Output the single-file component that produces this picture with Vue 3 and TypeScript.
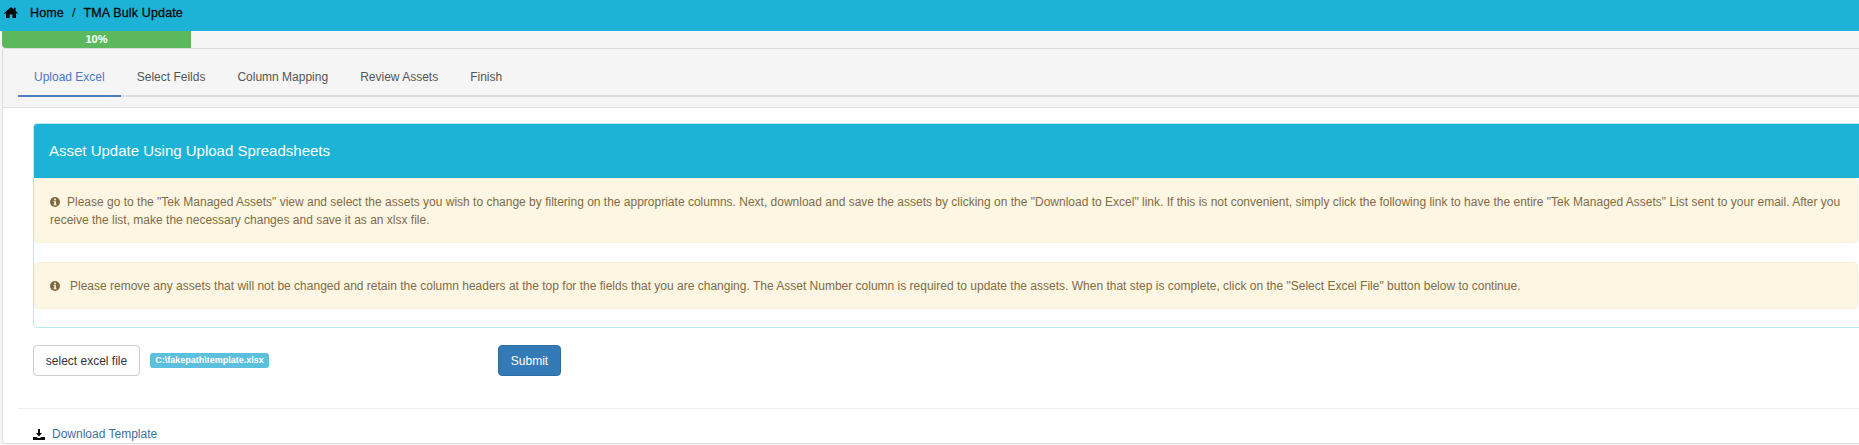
<script setup lang="ts">
const tabs: string[] = ['Upload Excel', 'Select Feilds', 'Column Mapping', 'Review Assets', 'Finish']
const alerts = [
  {
    text: 'Please go to the "Tek Managed Assets" view and select the assets you wish to change by filtering on the appropriate columns. Next, download and save the assets by clicking on the "Download to Excel" link. If this is not convenient, simply click the following link to have the entire "Tek Managed Assets" List sent to your email. After you receive the list, make the necessary changes and save it as an xlsx file.',
    gap: false
  },
  {
    text: 'Please remove any assets that will not be changed and retain the column headers at the top for the fields that you are changing. The Asset Number column is required to update the assets. When that step is complete, click on the "Select Excel File" button below to continue.',
    gap: true
  }
]
</script>

<template>
  <div class="page">
    <header class="topbar">
      <svg class="home" viewBox="0 0 14 11" width="14" height="11" aria-hidden="true">
        <path d="M7 0 L9.8 2.5 V.8 H11.6 V4.1 L14 6.2 L13.2 7.1 L12 6 V11 H8.4 V7.4 H5.6 V11 H2 V6 L.8 7.1 L0 6.2 Z" fill="#0b0b0b"/>
      </svg>
      <span class="crumb">Home</span>
      <span class="sep">/</span>
      <span class="crumb">TMA Bulk Update</span>
    </header>

    <div class="progress"><div class="bar">10%</div></div>

    <section class="panel">
      <div class="panel-head">
        <nav class="tabs">
          <a v-for="(t, i) in tabs" :key="t" class="tab" :class="{ active: i === 0 }">{{ t }}</a>
        </nav>
      </div>

      <div class="panel-body">
        <div class="card">
          <div class="card-head">Asset Update Using Upload Spreadsheets</div>
          <div class="alerts">
            <div v-for="a in alerts" :key="a.text" class="alert">
              <svg class="info" viewBox="0 0 12 12" width="10" height="10" aria-hidden="true">
                <circle cx="6" cy="6" r="6" fill="#7d6a45"/>
                <rect x="4.9" y="2" width="2.2" height="2" fill="#fcf5e1"/>
                <path d="M4.2 5 H7.1 V8.9 H8 V10 H4.2 V8.9 H5 V6.1 H4.2 Z" fill="#fcf5e1"/>
              </svg><span :class="{ wide: a.gap }">{{ a.text }}</span>
            </div>
          </div>
        </div>

        <div class="actions">
          <button class="file-btn" type="button">select excel file</button>
          <span class="badge">C:\fakepath\template.xlsx</span>
          <button class="submit" type="button">Submit</button>
        </div>

        <hr class="rule" />

        <a class="download">
          <svg viewBox="0 0 12 11" width="12" height="11" aria-hidden="true">
            <path d="M5 0 H7 V4 H9 L6 7.4 L3 4 H5 Z M0 8 H3.6 L5 9 H7 L8.4 8 H12 V11 H0 Z" fill="#0b0b0b"/>
          </svg>
          <span>Download Template</span>
        </a>
      </div>
    </section>
  </div>
</template>

<style>
html, body { margin: 0; background: #f5f5f5; overflow: hidden; }
</style>

<style scoped>
.page {
  width: 1859px;
  height: 445px;
  overflow: hidden;
  background: #f5f5f5;
  font-family: "Liberation Sans", Arial, sans-serif;
  font-size: 12px;
  color: #333;
}
.topbar {
  height: 31px;
  background: #1cb3d7;
  display: flex;
  align-items: center;
  padding: 0 0 6px 4px;
  box-sizing: border-box;
  font-size: 12.5px;
  color: #0a0a0a;
}
.home { margin-right: 12px; }
.crumb { -webkit-text-stroke: 0.3px #0a0a0a; letter-spacing: 0.15px; }
.sep { margin: 0 8px; }
.progress {
  height: 17px;
  padding-left: 2px;
  box-sizing: border-box;
}
.bar {
  width: 189px;
  height: 17px;
  background: #5cb85c;
  border-radius: 0 0 0 4px;
  color: #fff;
  font-size: 11px;
  font-weight: 700;
  line-height: 17px;
  text-align: center;
}
.panel {
  margin-left: 2px;
  width: 1880px;
  height: 396px;
  box-sizing: border-box;
  border: 1px solid #ddd;
  border-radius: 3px;
  background: #fff;
  overflow: hidden;
}
.panel-head {
  height: 59px;
  box-sizing: border-box;
  background: #f5f5f5;
  border-bottom: 1px solid #ddd;
  padding: 0 0 10px 15px;
  display: flex;
}
.tabs {
  flex: 1;
  display: flex;
  border-bottom: 2px solid #ddd;
}
.tab {
  padding: 0 16px;
  height: 48px;
  line-height: 57px;
  box-sizing: border-box;
  color: #555;
  font-size: 12px;
}
.tab.active {
  color: #4e76c9;
  border-bottom: 2px solid #4e7fc6;
}
.panel-body { padding: 15px 0 0 30px; }
.card {
  width: 1900px;
  height: 205px;
  box-sizing: border-box;
  border: 1px solid #bce8f1;
  border-radius: 4px;
  overflow: hidden;
}
.card-head {
  height: 54px;
  background: #1cb3d7;
  color: #fff;
  font-size: 15px;
  line-height: 54px;
  padding-left: 15px;
}
.alerts {
  width: 1824px;
}
.alert {
  background: #fdf6e2;
  border: 1px solid #faf0d8;
  border-radius: 4px;
  color: #806c47;
  font-size: 12px;
  line-height: 18px;
  padding: 14px 15px 13px;
  margin-bottom: 19px;
}
.info { margin-right: 7px; vertical-align: -1px; }
.wide { margin-left: 3px; }
.actions {
  display: flex;
  align-items: center;
  margin-top: 17px;
  height: 31px;
}
.file-btn {
  width: 107px;
  height: 31px;
  background: #fff;
  border: 1px solid #ccc;
  border-radius: 4px;
  font: 12px "Liberation Sans", Arial, sans-serif;
  color: #333;
  padding: 0;
}
.badge {
  margin-left: 10px;
  width: 119px;
  height: 15px;
  box-sizing: border-box;
  background: #5bc0de;
  border-radius: 3px;
  color: #fff;
  font-size: 9px;
  font-weight: 700;
  line-height: 15px;
  text-align: center;
  white-space: nowrap;
}
.submit {
  margin-left: 229px;
  width: 63px;
  height: 31px;
  background: #337ab7;
  border: 1px solid #2e6da4;
  border-radius: 4px;
  color: #fff;
  font: 12px "Liberation Sans", Arial, sans-serif;
  padding: 0;
}
.rule {
  margin: 32px 0 0 -15px;
  border: 0;
  border-top: 1px solid #eee;
}
.download {
  display: flex;
  align-items: center;
  gap: 7px;
  margin-top: 17px;
  color: #3f6f9f;
  font-size: 12px;
  line-height: 16px;
}
</style>
